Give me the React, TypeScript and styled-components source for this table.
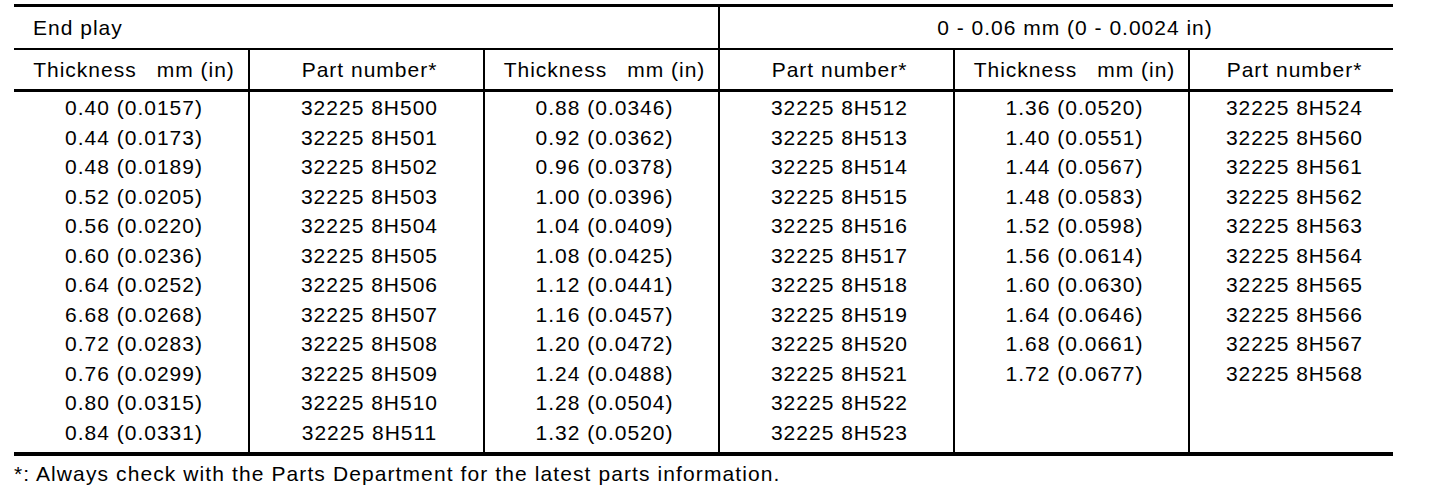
import styled, { createGlobalStyle } from 'styled-components';

const GlobalStyle = createGlobalStyle`
  html, body {
    margin: 0;
    padding: 0;
    background: #fff;
  }
  body {
    font-family: "Liberation Sans", Arial, sans-serif;
    color: #000;
  }
`;

const Page = styled.div`
  padding: 4px 0 0 14px;
  width: 1379px;
`;

const Table = styled.div`
  border-top: 3px solid #000;
  border-bottom: 4px solid #000;
  font-size: 21px;
  letter-spacing: 1px;
`;

const COLS = '236px 235px 235px 235px 235px 203px';

const TitleRow = styled.div`
  display: grid;
  grid-template-columns: 706px 673px;
  height: 43px;
  border-bottom: 2px solid #000;
  box-sizing: border-box;
`;

const TitleCell = styled.div<{ $center?: boolean }>`
  display: flex;
  align-items: center;
  justify-content: ${({ $center }) => ($center ? 'center' : 'flex-start')};
  padding-left: ${({ $center }) => ($center ? '37px' : '19px')};
  ${({ $center }) => !$center && 'border-right: 2px solid #000;'}
`;

const HeadRow = styled.div`
  display: grid;
  grid-template-columns: ${COLS};
  height: 42px;
  border-bottom: 3px solid #000;
  box-sizing: border-box;
`;

const HeadCell = styled.div<{ $last?: boolean }>`
  display: flex;
  align-items: center;
  justify-content: center;
  gap: 20px;
  padding-left: 6px;
  ${({ $last }) => !$last && 'border-right: 2px solid #000;'}
`;

const Body = styled.div`
  display: grid;
  grid-template-columns: ${COLS};
`;

const Column = styled.div<{ $last?: boolean }>`
  display: flex;
  flex-direction: column;
  padding: 1px 0 5px;
  min-height: 354px;
  ${({ $last }) => !$last && 'border-right: 2px solid #000;'}
`;

const Value = styled.div`
  height: 29.5px;
  line-height: 29.5px;
  text-align: center;
  padding-left: 6px;
  white-space: nowrap;
`;

const Note = styled.p`
  margin: 0;
  padding-top: 6px;
  font-size: 21px;
  letter-spacing: 1.1px;
  white-space: nowrap;
`;

const range = (start: number, count: number) =>
  Array.from({ length: count }, (_, i) => `32225 8H${start + i}`);

const columns: string[][] = [
  [
    '0.40 (0.0157)',
    '0.44 (0.0173)',
    '0.48 (0.0189)',
    '0.52 (0.0205)',
    '0.56 (0.0220)',
    '0.60 (0.0236)',
    '0.64 (0.0252)',
    '6.68 (0.0268)',
    '0.72 (0.0283)',
    '0.76 (0.0299)',
    '0.80 (0.0315)',
    '0.84 (0.0331)',
  ],
  range(500, 12),
  [
    '0.88 (0.0346)',
    '0.92 (0.0362)',
    '0.96 (0.0378)',
    '1.00 (0.0396)',
    '1.04 (0.0409)',
    '1.08 (0.0425)',
    '1.12 (0.0441)',
    '1.16 (0.0457)',
    '1.20 (0.0472)',
    '1.24 (0.0488)',
    '1.28 (0.0504)',
    '1.32 (0.0520)',
  ],
  range(512, 12),
  [
    '1.36 (0.0520)',
    '1.40 (0.0551)',
    '1.44 (0.0567)',
    '1.48 (0.0583)',
    '1.52 (0.0598)',
    '1.56 (0.0614)',
    '1.60 (0.0630)',
    '1.64 (0.0646)',
    '1.68 (0.0661)',
    '1.72 (0.0677)',
  ],
  ['32225 8H524', ...range(560, 9)],
];

const App = () => {
  return (
    <Page>
      <GlobalStyle />
      <Table>
        <TitleRow>
          <TitleCell>End play</TitleCell>
          <TitleCell $center>0 - 0.06 mm (0 - 0.0024 in)</TitleCell>
        </TitleRow>
        <HeadRow>
          {columns.map((_, i) =>
            i % 2 === 0 ? (
              <HeadCell key={i}>
                <span>Thickness</span>
                <span>mm (in)</span>
              </HeadCell>
            ) : (
              <HeadCell key={i} $last={i === columns.length - 1}>
                Part number*
              </HeadCell>
            )
          )}
        </HeadRow>
        <Body>
          {columns.map((values, i) => (
            <Column key={i} $last={i === columns.length - 1}>
              {values.map((v) => (
                <Value key={v}>{v}</Value>
              ))}
            </Column>
          ))}
        </Body>
      </Table>
      <Note>*: Always check with the Parts Department for the latest parts information.</Note>
    </Page>
  );
};

export default App;
